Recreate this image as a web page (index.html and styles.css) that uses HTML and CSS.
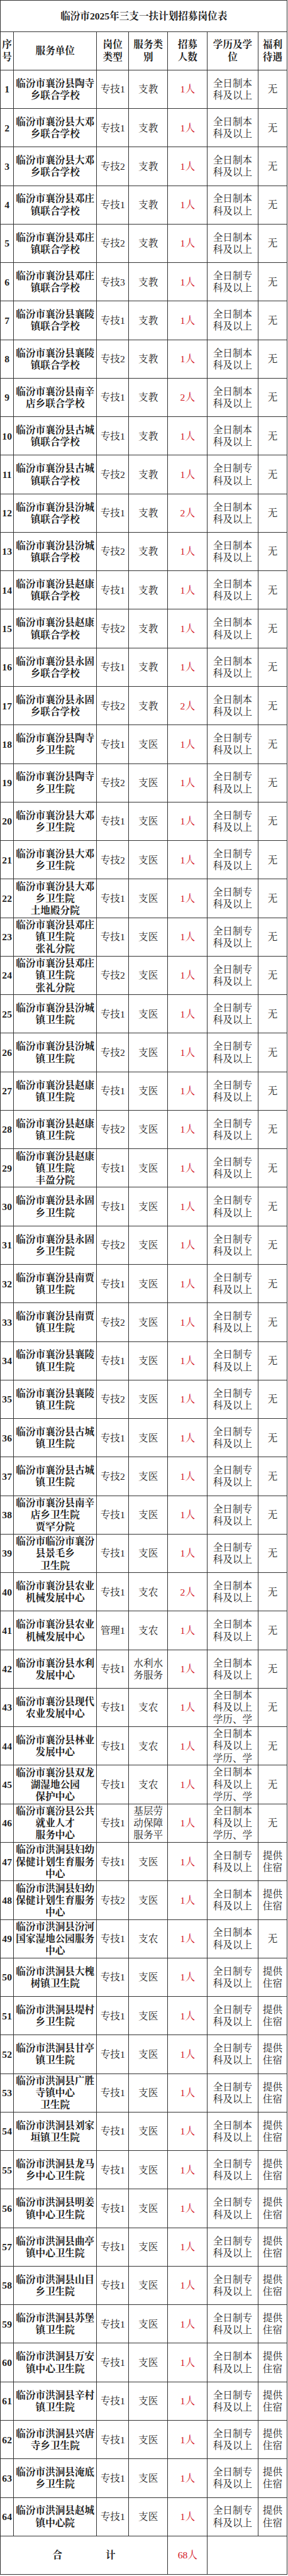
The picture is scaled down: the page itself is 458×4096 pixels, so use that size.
FILE: index.html
```html
<!DOCTYPE html>
<html lang="zh-CN">
<head>
<meta charset="utf-8">
<title>临汾市2025年三支一扶计划招募岗位表</title>
<link rel="stylesheet" href="styles.css">
</head>
<body>
<div class="sheet">
  <div class="c title">临汾市2025年三支一扶计划招募岗位表</div>

  <div class="row head">
    <div class="c">序<br>号</div><div class="c">服务单位</div><div class="c">岗位<br>类型</div><div class="c">服务类<br>别</div><div class="c">招募<br>人数</div><div class="c">学历及学<br>位</div><div class="c">福利<br>待遇</div>
  </div>

  <div class="row"><div class="c n">1</div><div class="c u">临汾市襄汾县陶寺<br>乡联合学校</div><div class="c">专技1</div><div class="c">支教</div><div class="c r">1人</div><div class="c">全日制本<br>科及以上</div><div class="c">无</div></div>
  <div class="row"><div class="c n">2</div><div class="c u">临汾市襄汾县大邓<br>乡联合学校</div><div class="c">专技1</div><div class="c">支教</div><div class="c r">1人</div><div class="c">全日制本<br>科及以上</div><div class="c">无</div></div>
  <div class="row"><div class="c n">3</div><div class="c u">临汾市襄汾县大邓<br>乡联合学校</div><div class="c">专技2</div><div class="c">支教</div><div class="c r">1人</div><div class="c">全日制本<br>科及以上</div><div class="c">无</div></div>
  <div class="row"><div class="c n">4</div><div class="c u">临汾市襄汾县邓庄<br>镇联合学校</div><div class="c">专技1</div><div class="c">支教</div><div class="c r">1人</div><div class="c">全日制本<br>科及以上</div><div class="c">无</div></div>
  <div class="row"><div class="c n">5</div><div class="c u">临汾市襄汾县邓庄<br>镇联合学校</div><div class="c">专技2</div><div class="c">支教</div><div class="c r">1人</div><div class="c">全日制本<br>科及以上</div><div class="c">无</div></div>
  <div class="row"><div class="c n">6</div><div class="c u">临汾市襄汾县邓庄<br>镇联合学校</div><div class="c">专技3</div><div class="c">支教</div><div class="c r">1人</div><div class="c">全日制专<br>科及以上</div><div class="c">无</div></div>
  <div class="row"><div class="c n">7</div><div class="c u">临汾市襄汾县襄陵<br>镇联合学校</div><div class="c">专技1</div><div class="c">支教</div><div class="c r">1人</div><div class="c">全日制本<br>科及以上</div><div class="c">无</div></div>
  <div class="row"><div class="c n">8</div><div class="c u">临汾市襄汾县襄陵<br>镇联合学校</div><div class="c">专技2</div><div class="c">支教</div><div class="c r">1人</div><div class="c">全日制本<br>科及以上</div><div class="c">无</div></div>
  <div class="row"><div class="c n">9</div><div class="c u">临汾市襄汾县南辛<br>店乡联合学校</div><div class="c">专技1</div><div class="c">支教</div><div class="c r">2人</div><div class="c">全日制本<br>科及以上</div><div class="c">无</div></div>
  <div class="row"><div class="c n">10</div><div class="c u">临汾市襄汾县古城<br>镇联合学校</div><div class="c">专技1</div><div class="c">支教</div><div class="c r">1人</div><div class="c">全日制本<br>科及以上</div><div class="c">无</div></div>
  <div class="row"><div class="c n">11</div><div class="c u">临汾市襄汾县古城<br>镇联合学校</div><div class="c">专技2</div><div class="c">支教</div><div class="c r">1人</div><div class="c">全日制专<br>科及以上</div><div class="c">无</div></div>
  <div class="row"><div class="c n">12</div><div class="c u">临汾市襄汾县汾城<br>镇联合学校</div><div class="c">专技1</div><div class="c">支教</div><div class="c r">2人</div><div class="c">全日制本<br>科及以上</div><div class="c">无</div></div>
  <div class="row"><div class="c n">13</div><div class="c u">临汾市襄汾县汾城<br>镇联合学校</div><div class="c">专技2</div><div class="c">支教</div><div class="c r">1人</div><div class="c">全日制本<br>科及以上</div><div class="c">无</div></div>
  <div class="row"><div class="c n">14</div><div class="c u">临汾市襄汾县赵康<br>镇联合学校</div><div class="c">专技1</div><div class="c">支教</div><div class="c r">1人</div><div class="c">全日制本<br>科及以上</div><div class="c">无</div></div>
  <div class="row"><div class="c n">15</div><div class="c u">临汾市襄汾县赵康<br>镇联合学校</div><div class="c">专技2</div><div class="c">支教</div><div class="c r">1人</div><div class="c">全日制本<br>科及以上</div><div class="c">无</div></div>
  <div class="row"><div class="c n">16</div><div class="c u">临汾市襄汾县永固<br>乡联合学校</div><div class="c">专技1</div><div class="c">支教</div><div class="c r">1人</div><div class="c">全日制本<br>科及以上</div><div class="c">无</div></div>
  <div class="row"><div class="c n">17</div><div class="c u">临汾市襄汾县永固<br>乡联合学校</div><div class="c">专技2</div><div class="c">支教</div><div class="c r">2人</div><div class="c">全日制本<br>科及以上</div><div class="c">无</div></div>
  <div class="row"><div class="c n">18</div><div class="c u">临汾市襄汾县陶寺<br>乡卫生院</div><div class="c">专技1</div><div class="c">支医</div><div class="c r">1人</div><div class="c">全日制专<br>科及以上</div><div class="c">无</div></div>
  <div class="row"><div class="c n">19</div><div class="c u">临汾市襄汾县陶寺<br>乡卫生院</div><div class="c">专技2</div><div class="c">支医</div><div class="c r">1人</div><div class="c">全日制专<br>科及以上</div><div class="c">无</div></div>
  <div class="row"><div class="c n">20</div><div class="c u">临汾市襄汾县大邓<br>乡卫生院</div><div class="c">专技1</div><div class="c">支医</div><div class="c r">1人</div><div class="c">全日制专<br>科及以上</div><div class="c">无</div></div>
  <div class="row"><div class="c n">21</div><div class="c u">临汾市襄汾县大邓<br>乡卫生院</div><div class="c">专技2</div><div class="c">支医</div><div class="c r">1人</div><div class="c">全日制专<br>科及以上</div><div class="c">无</div></div>
  <div class="row"><div class="c n">22</div><div class="c u">临汾市襄汾县大邓<br>乡卫生院<br>土地殿分院</div><div class="c">专技1</div><div class="c">支医</div><div class="c r">1人</div><div class="c">全日制专<br>科及以上</div><div class="c">无</div></div>
  <div class="row"><div class="c n">23</div><div class="c u">临汾市襄汾县邓庄<br>镇卫生院<br>张礼分院</div><div class="c">专技1</div><div class="c">支医</div><div class="c r">1人</div><div class="c">全日制专<br>科及以上</div><div class="c">无</div></div>
  <div class="row"><div class="c n">24</div><div class="c u">临汾市襄汾县邓庄<br>镇卫生院<br>张礼分院</div><div class="c">专技2</div><div class="c">支医</div><div class="c r">1人</div><div class="c">全日制专<br>科及以上</div><div class="c">无</div></div>
  <div class="row"><div class="c n">25</div><div class="c u">临汾市襄汾县汾城<br>镇卫生院</div><div class="c">专技1</div><div class="c">支医</div><div class="c r">1人</div><div class="c">全日制专<br>科及以上</div><div class="c">无</div></div>
  <div class="row"><div class="c n">26</div><div class="c u">临汾市襄汾县汾城<br>镇卫生院</div><div class="c">专技2</div><div class="c">支医</div><div class="c r">1人</div><div class="c">全日制专<br>科及以上</div><div class="c">无</div></div>
  <div class="row"><div class="c n">27</div><div class="c u">临汾市襄汾县赵康<br>镇卫生院</div><div class="c">专技1</div><div class="c">支医</div><div class="c r">1人</div><div class="c">全日制专<br>科及以上</div><div class="c">无</div></div>
  <div class="row"><div class="c n">28</div><div class="c u">临汾市襄汾县赵康<br>镇卫生院</div><div class="c">专技2</div><div class="c">支医</div><div class="c r">1人</div><div class="c">全日制专<br>科及以上</div><div class="c">无</div></div>
  <div class="row"><div class="c n">29</div><div class="c u">临汾市襄汾县赵康<br>镇卫生院<br>丰盈分院</div><div class="c">专技1</div><div class="c">支医</div><div class="c r">1人</div><div class="c">全日制专<br>科及以上</div><div class="c">无</div></div>
  <div class="row"><div class="c n">30</div><div class="c u">临汾市襄汾县永固<br>乡卫生院</div><div class="c">专技1</div><div class="c">支医</div><div class="c r">1人</div><div class="c">全日制专<br>科及以上</div><div class="c">无</div></div>
  <div class="row"><div class="c n">31</div><div class="c u">临汾市襄汾县永固<br>乡卫生院</div><div class="c">专技2</div><div class="c">支医</div><div class="c r">1人</div><div class="c">全日制专<br>科及以上</div><div class="c">无</div></div>
  <div class="row"><div class="c n">32</div><div class="c u">临汾市襄汾县南贾<br>镇卫生院</div><div class="c">专技1</div><div class="c">支医</div><div class="c r">1人</div><div class="c">全日制专<br>科及以上</div><div class="c">无</div></div>
  <div class="row"><div class="c n">33</div><div class="c u">临汾市襄汾县南贾<br>镇卫生院</div><div class="c">专技2</div><div class="c">支医</div><div class="c r">1人</div><div class="c">全日制专<br>科及以上</div><div class="c">无</div></div>
  <div class="row"><div class="c n">34</div><div class="c u">临汾市襄汾县襄陵<br>镇卫生院</div><div class="c">专技1</div><div class="c">支医</div><div class="c r">1人</div><div class="c">全日制专<br>科及以上</div><div class="c">无</div></div>
  <div class="row"><div class="c n">35</div><div class="c u">临汾市襄汾县襄陵<br>镇卫生院</div><div class="c">专技2</div><div class="c">支医</div><div class="c r">1人</div><div class="c">全日制专<br>科及以上</div><div class="c">无</div></div>
  <div class="row"><div class="c n">36</div><div class="c u">临汾市襄汾县古城<br>镇卫生院</div><div class="c">专技1</div><div class="c">支医</div><div class="c r">1人</div><div class="c">全日制专<br>科及以上</div><div class="c">无</div></div>
  <div class="row"><div class="c n">37</div><div class="c u">临汾市襄汾县古城<br>镇卫生院</div><div class="c">专技2</div><div class="c">支医</div><div class="c r">1人</div><div class="c">全日制专<br>科及以上</div><div class="c">无</div></div>
  <div class="row"><div class="c n">38</div><div class="c u">临汾市襄汾县南辛<br>店乡卫生院<br>贾罕分院</div><div class="c">专技1</div><div class="c">支医</div><div class="c r">1人</div><div class="c">全日制专<br>科及以上</div><div class="c">无</div></div>
  <div class="row"><div class="c n">39</div><div class="c u">临汾市临汾市襄汾<br>县景毛乡<br>卫生院</div><div class="c">专技1</div><div class="c">支医</div><div class="c r">1人</div><div class="c">全日制专<br>科及以上</div><div class="c">无</div></div>
  <div class="row"><div class="c n">40</div><div class="c u">临汾市襄汾县农业<br>机械发展中心</div><div class="c">专技1</div><div class="c">支农</div><div class="c r">2人</div><div class="c">全日制本<br>科及以上</div><div class="c">无</div></div>
  <div class="row"><div class="c n">41</div><div class="c u">临汾市襄汾县农业<br>机械发展中心</div><div class="c">管理1</div><div class="c">支农</div><div class="c r">1人</div><div class="c">全日制本<br>科及以上</div><div class="c">无</div></div>
  <div class="row"><div class="c n">42</div><div class="c u">临汾市襄汾县水利<br>发展中心</div><div class="c">专技1</div><div class="c">水利水<br>务服务</div><div class="c r">1人</div><div class="c">全日制本<br>科及以上</div><div class="c">无</div></div>
  <div class="row"><div class="c n">43</div><div class="c u">临汾市襄汾县现代<br>农业发展中心</div><div class="c">专技1</div><div class="c">支农</div><div class="c r">1人</div><div class="c clip">全日制本<br>科及以上<br>学历、学</div><div class="c">无</div></div>
  <div class="row"><div class="c n">44</div><div class="c u">临汾市襄汾县林业<br>发展中心</div><div class="c">专技1</div><div class="c">支农</div><div class="c r">1人</div><div class="c clip">全日制本<br>科及以上<br>学历、学</div><div class="c">无</div></div>
  <div class="row"><div class="c n">45</div><div class="c u">临汾市襄汾县双龙<br>湖湿地公园<br>保护中心</div><div class="c">专技1</div><div class="c">支农</div><div class="c r">1人</div><div class="c clip">全日制本<br>科及以上<br>学历、学</div><div class="c">无</div></div>
  <div class="row"><div class="c n">46</div><div class="c u">临汾市襄汾县公共<br>就业人才<br>服务中心</div><div class="c">专技1</div><div class="c clip">基层劳<br>动保障<br>服务平</div><div class="c r">1人</div><div class="c clip">全日制本<br>科及以上<br>学历、学</div><div class="c">无</div></div>
  <div class="row"><div class="c n">47</div><div class="c u">临汾市洪洞县妇幼<br>保健计划生育服务<br>中心</div><div class="c">专技1</div><div class="c">支医</div><div class="c r">1人</div><div class="c">全日制专<br>科及以上</div><div class="c">提供<br>住宿</div></div>
  <div class="row"><div class="c n">48</div><div class="c u">临汾市洪洞县妇幼<br>保健计划生育服务<br>中心</div><div class="c">专技2</div><div class="c">支医</div><div class="c r">1人</div><div class="c">全日制本<br>科及以上</div><div class="c">提供<br>住宿</div></div>
  <div class="row"><div class="c n">49</div><div class="c u">临汾市洪洞县汾河<br>国家湿地公园服务<br>中心</div><div class="c">专技1</div><div class="c">支农</div><div class="c r">1人</div><div class="c">全日制本<br>科及以上</div><div class="c">无</div></div>
  <div class="row"><div class="c n">50</div><div class="c u">临汾市洪洞县大槐<br>树镇卫生院</div><div class="c">专技1</div><div class="c">支医</div><div class="c r">1人</div><div class="c">全日制专<br>科及以上</div><div class="c">提供<br>住宿</div></div>
  <div class="row"><div class="c n">51</div><div class="c u">临汾市洪洞县堤村<br>乡卫生院</div><div class="c">专技1</div><div class="c">支医</div><div class="c r">1人</div><div class="c">全日制专<br>科及以上</div><div class="c">提供<br>住宿</div></div>
  <div class="row"><div class="c n">52</div><div class="c u">临汾市洪洞县甘亭<br>镇卫生院</div><div class="c">专技1</div><div class="c">支医</div><div class="c r">1人</div><div class="c">全日制专<br>科及以上</div><div class="c">提供<br>住宿</div></div>
  <div class="row"><div class="c n">53</div><div class="c u">临汾市洪洞县广胜<br>寺镇中心<br>卫生院</div><div class="c">专技1</div><div class="c">支医</div><div class="c r">1人</div><div class="c">全日制专<br>科及以上</div><div class="c">提供<br>住宿</div></div>
  <div class="row"><div class="c n">54</div><div class="c u">临汾市洪洞县刘家<br>垣镇卫生院</div><div class="c">专技1</div><div class="c">支医</div><div class="c r">1人</div><div class="c">全日制本<br>科及以上</div><div class="c">提供<br>住宿</div></div>
  <div class="row"><div class="c n">55</div><div class="c u">临汾市洪洞县龙马<br>乡中心卫生院</div><div class="c">专技1</div><div class="c">支医</div><div class="c r">1人</div><div class="c">全日制专<br>科及以上</div><div class="c">提供<br>住宿</div></div>
  <div class="row"><div class="c n">56</div><div class="c u">临汾市洪洞县明姜<br>镇中心卫生院</div><div class="c">专技1</div><div class="c">支医</div><div class="c r">1人</div><div class="c">全日制专<br>科及以上</div><div class="c">提供<br>住宿</div></div>
  <div class="row"><div class="c n">57</div><div class="c u">临汾市洪洞县曲亭<br>镇中心卫生院</div><div class="c">专技1</div><div class="c">支医</div><div class="c r">1人</div><div class="c">全日制专<br>科及以上</div><div class="c">提供<br>住宿</div></div>
  <div class="row"><div class="c n">58</div><div class="c u">临汾市洪洞县山目<br>乡卫生院</div><div class="c">专技1</div><div class="c">支医</div><div class="c r">1人</div><div class="c">全日制专<br>科及以上</div><div class="c">提供<br>住宿</div></div>
  <div class="row"><div class="c n">59</div><div class="c u">临汾市洪洞县苏堡<br>镇卫生院</div><div class="c">专技1</div><div class="c">支医</div><div class="c r">1人</div><div class="c">全日制专<br>科及以上</div><div class="c">提供<br>住宿</div></div>
  <div class="row"><div class="c n">60</div><div class="c u">临汾市洪洞县万安<br>镇中心卫生院</div><div class="c">专技1</div><div class="c">支医</div><div class="c r">1人</div><div class="c">全日制本<br>科及以上</div><div class="c">提供<br>住宿</div></div>
  <div class="row"><div class="c n">61</div><div class="c u">临汾市洪洞县辛村<br>镇卫生院</div><div class="c">专技1</div><div class="c">支医</div><div class="c r">1人</div><div class="c">全日制专<br>科及以上</div><div class="c">提供<br>住宿</div></div>
  <div class="row"><div class="c n">62</div><div class="c u">临汾市洪洞县兴唐<br>寺乡卫生院</div><div class="c">专技1</div><div class="c">支医</div><div class="c r">1人</div><div class="c">全日制专<br>科及以上</div><div class="c">提供<br>住宿</div></div>
  <div class="row"><div class="c n">63</div><div class="c u">临汾市洪洞县淹底<br>乡卫生院</div><div class="c">专技1</div><div class="c">支医</div><div class="c r">1人</div><div class="c">全日制专<br>科及以上</div><div class="c">提供<br>住宿</div></div>
  <div class="row"><div class="c n">64</div><div class="c u">临汾市洪洞县赵城<br>镇中心院</div><div class="c">专技1</div><div class="c">支医</div><div class="c r">1人</div><div class="c">全日制专<br>科及以上</div><div class="c">提供<br>住宿</div></div>

  <div class="row total">
    <div class="c sum"><span>合</span><span>计</span></div>
    <div class="c r">68人</div>
    <div class="c blank"></div>
  </div>
</div>
</body>
</html>
```

FILE: styles.css
```css
html, body {
  margin: 0;
  padding: 0;
  background: #ffffff;
}

.sheet {
  display: grid;
  grid-template-columns: 21.3px 131.9px 51px 62px 63.2px 80.2px 46.8px;
  grid-template-rows: 49.5px;
  grid-auto-rows: 61.27px;
  width: max-content;
  border-left: 1px solid #333;
  border-top: 1px solid #333;
  font-family: "Liberation Serif", "Noto Serif CJK SC", "Noto Sans CJK SC", serif;
  font-size: 15.6px;
  line-height: 19.2px;
  color: #1e1e1e;
}

.row {
  display: contents;
}

.c {
  display: flex;
  align-items: center;
  justify-content: center;
  text-align: center;
  overflow: hidden;
  border-right: 1px solid #333;
  border-bottom: 1px solid #333;
  min-width: 0;
}

.title {
  grid-column: 1 / -1;
  font-weight: 700;
}

.head .c {
  font-weight: 700;
}

.n,
.u {
  font-weight: 700;
}

.r {
  color: #d3121c;
}

.clip {
  align-items: flex-start;
  padding-top: 1px;
}

.total .sum {
  grid-column: 1 / span 4;
  gap: 69px;
  font-weight: 700;
}

.total .blank {
  grid-column: 6 / span 2;
}
```
